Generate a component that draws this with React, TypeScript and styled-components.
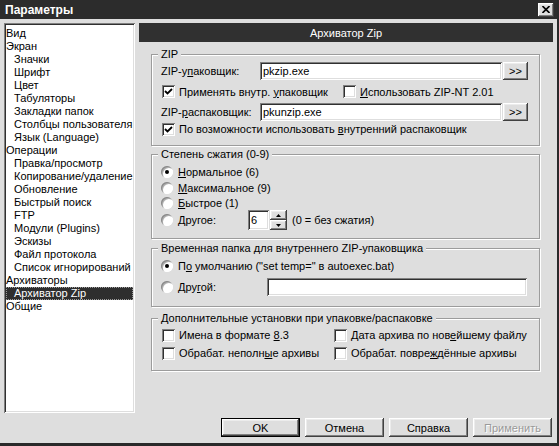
import React from 'react';
import styled, { createGlobalStyle } from 'styled-components';

const GlobalStyle = createGlobalStyle`
  html, body {
    margin: 0;
    padding: 0;
    background: #dedede;
  }
  body {
    font-family: "Liberation Sans", Arial, sans-serif;
    font-size: 11px;
    color: #000;
  }
  * {
    box-sizing: border-box;
  }
`;

const raised = `
  box-shadow: inset -1px -1px 0 #404040, inset 1px 1px 0 #ffffff,
    inset -2px -2px 0 #808080, inset 2px 2px 0 #ececec;
`;

const sunken = `
  box-shadow: inset 1px 1px 0 #808080, inset -1px -1px 0 #ffffff,
    inset 2px 2px 0 #303030, inset -2px -2px 0 #dedede;
`;

const Window = styled.div`
  width: 559px;
  height: 446px;
  background: #dedede;
  border-right: 2px solid #2a2a2a;
  border-bottom: 3px solid #2a2a2a;
  display: flex;
  flex-direction: column;
`;

const TitleBar = styled.div`
  height: 19px;
  flex: none;
  background: #2c2c2c;
  display: flex;
  align-items: center;
  justify-content: space-between;
  padding: 0 3px 0 5px;
`;

const TitleText = styled.span`
  color: #fff;
  font-weight: bold;
  font-size: 12px;
`;

const CloseButton = styled.div`
  width: 16px;
  height: 14px;
  background: #dedede;
  ${raised}
  display: flex;
  align-items: center;
  justify-content: center;
`;

const Body = styled.div`
  height: 394px;
  flex: none;
  display: flex;
  gap: 4px;
  padding: 4px 4px 0 4px;
`;

const TreeList = styled.div`
  width: 131px;
  height: 390px;
  background: #fff;
  ${sunken}
  padding: 4px 2px 2px 2px;
`;

const TreeItem = styled.div<{ $level: number; $selected?: boolean }>`
  height: 13px;
  line-height: 13px;
  white-space: nowrap;
  padding-left: ${(p) => p.$level * 8}px;
  background: ${(p) => (p.$selected ? '#2e2e2e' : 'transparent')};
  color: ${(p) => (p.$selected ? '#fff' : '#000')};
  outline: ${(p) => (p.$selected ? '1px dotted #9a9a9a' : 'none')};
  outline-offset: -1px;
`;

const Panel = styled.div`
  flex: 1;
  display: flex;
  flex-direction: column;
`;

const PanelHeader = styled.div`
  height: 19px;
  background: #303030;
  color: #fff;
  display: flex;
  align-items: center;
  justify-content: center;
`;

const Groups = styled.div`
  display: flex;
  flex-direction: column;
  padding: 0 13px 0 12px;
`;

const Group = styled.div<{ $mt: number; $pt: number; $pb: number }>`
  position: relative;
  margin-top: ${(p) => p.$mt}px;
  padding: ${(p) => p.$pt}px 8px ${(p) => p.$pb}px 9px;
  border: 1px solid #9c9c9c;
  box-shadow: inset 1px 1px 0 #fff, 1px 1px 0 #fff;
  display: flex;
  flex-direction: column;
`;

const Legend = styled.span`
  position: absolute;
  top: -7px;
  left: 6px;
  padding: 0 3px;
  line-height: 13px;
  background: #dedede;
  white-space: nowrap;
`;

const FieldRow = styled.div<{ $h: number; $mt?: number }>`
  height: ${(p) => p.$h}px;
  margin-top: ${(p) => p.$mt ?? 0}px;
  display: flex;
  align-items: center;
`;

const FieldLabel = styled.span<{ $w: number }>`
  width: ${(p) => p.$w}px;
  flex: none;
  white-space: nowrap;
`;

const TextBox = styled.div<{ $w: number; $h: number }>`
  width: ${(p) => p.$w}px;
  height: ${(p) => p.$h}px;
  flex: none;
  background: #fff;
  ${sunken}
  padding: 0 3px;
  display: flex;
  align-items: center;
`;

const BrowseButton = styled.div`
  width: 25px;
  height: 18px;
  margin-left: 1px;
  background: #dedede;
  ${raised}
  display: flex;
  align-items: center;
  justify-content: center;
  padding-bottom: 1px;
`;

const CheckItem = styled.label<{ $w?: number }>`
  width: ${(p) => (p.$w ? `${p.$w}px` : 'auto')};
  flex: none;
  display: flex;
  align-items: center;
  gap: 4px;
  white-space: nowrap;
  padding-left: 1px;
`;

const Box = styled.span`
  width: 13px;
  height: 13px;
  flex: none;
  background: #fff;
  ${sunken}
  display: flex;
  align-items: center;
  justify-content: center;
`;

const RadioDot = styled.span<{ $on?: boolean }>`
  width: 12px;
  height: 12px;
  flex: none;
  border-radius: 50%;
  background: #fff;
  box-shadow: inset 1px 1px 0 #8a8a8a, inset -1px -1px 0 #ffffff,
    inset 2px 2px 0 #b0b0b0;
  display: flex;
  align-items: center;
  justify-content: center;
  &::after {
    content: '';
    width: 4px;
    height: 4px;
    border-radius: 50%;
    background: ${(p) => (p.$on ? '#000' : 'transparent')};
  }
`;

const Option = styled.label<{ $w?: number }>`
  width: ${(p) => (p.$w ? `${p.$w}px` : 'auto')};
  flex: none;
  display: flex;
  align-items: center;
  gap: 5px;
  white-space: nowrap;
`;

const SpinInput = styled.div`
  width: 21px;
  height: 20px;
  background: #fff;
  ${sunken}
  padding-left: 3px;
  display: flex;
  align-items: center;
`;

const SpinButtons = styled.div`
  width: 17px;
  height: 20px;
  margin-left: 1px;
  display: flex;
  flex-direction: column;
`;

const SpinButton = styled.div`
  height: 10px;
  background: #dedede;
  ${raised}
  display: flex;
  align-items: center;
  justify-content: center;
`;

const Hint = styled.span`
  margin-left: 5px;
  white-space: nowrap;
`;

const Footer = styled.div`
  display: flex;
  justify-content: flex-end;
  gap: 5px;
  padding: 5px 5px 0 0;
`;

const DialogButton = styled.div<{ $default?: boolean; $disabled?: boolean }>`
  width: 79px;
  height: 19px;
  background: #dedede;
  border: ${(p) => (p.$default ? '1px solid #000' : 'none')};
  ${raised}
  display: flex;
  align-items: center;
  justify-content: center;
  color: ${(p) => (p.$disabled ? '#9a9a9a' : '#000')};
  text-shadow: ${(p) => (p.$disabled ? '1px 1px 0 #fff' : 'none')};
`;

const U = styled.span`
  text-decoration: underline;
  text-underline-offset: 1px;
`;

const Check = ({ on }: { on?: boolean }) => (
  <Box>
    {on && (
      <svg width="9" height="9" viewBox="0 0 9 9">
        <path d="M1 4 L3.5 6.5 L8 2" fill="none" stroke="#000" strokeWidth="1.8" />
      </svg>
    )}
  </Box>
);

const Arrow = ({ up }: { up?: boolean }) => (
  <svg width="5" height="3" viewBox="0 0 5 3">
    <path d={up ? 'M0 3 L2.5 0 L5 3 Z' : 'M0 0 L2.5 3 L5 0 Z'} fill="#000" />
  </svg>
);

const tree: { text: string; level: number; selected?: boolean }[] = [
  { text: 'Вид', level: 0 },
  { text: 'Экран', level: 0 },
  { text: 'Значки', level: 1 },
  { text: 'Шрифт', level: 1 },
  { text: 'Цвет', level: 1 },
  { text: 'Табуляторы', level: 1 },
  { text: 'Закладки папок', level: 1 },
  { text: 'Столбцы пользователя', level: 1 },
  { text: 'Язык (Language)', level: 1 },
  { text: 'Операции', level: 0 },
  { text: 'Правка/просмотр', level: 1 },
  { text: 'Копирование/удаление', level: 1 },
  { text: 'Обновление', level: 1 },
  { text: 'Быстрый поиск', level: 1 },
  { text: 'FTP', level: 1 },
  { text: 'Модули (Plugins)', level: 1 },
  { text: 'Эскизы', level: 1 },
  { text: 'Файл протокола', level: 1 },
  { text: 'Список игнорирований', level: 1 },
  { text: 'Архиваторы', level: 0 },
  { text: 'Архиватор Zip', level: 1, selected: true },
  { text: 'Общие', level: 0 },
];

export default function App() {
  return (
    <>
      <GlobalStyle />
      <Window>
        <TitleBar>
          <TitleText>Параметры</TitleText>
          <CloseButton>
            <svg width="8" height="7" viewBox="0 0 8 7">
              <path d="M0.5 0 L7.5 7 M7.5 0 L0.5 7" stroke="#000" strokeWidth="1.6" />
            </svg>
          </CloseButton>
        </TitleBar>

        <Body>
          <TreeList>
            {tree.map((t) => (
              <TreeItem key={t.text} $level={t.level} $selected={t.selected}>
                {t.text}
              </TreeItem>
            ))}
          </TreeList>

          <Panel>
            <PanelHeader>Архиватор Zip</PanelHeader>
            <Groups>
              <Group $mt={12} $pt={7} $pb={8}>
                <Legend>ZIP</Legend>
                <FieldRow $h={18}>
                  <FieldLabel $w={99}>
                    ZIP-у<U>п</U>аковщик:
                  </FieldLabel>
                  <TextBox $w={242} $h={18}>pkzip.exe</TextBox>
                  <BrowseButton>&gt;&gt;</BrowseButton>
                </FieldRow>
                <FieldRow $h={23}>
                  <CheckItem $w={181}>
                    <Check on />
                    <span>
                      Применять внутр. <U>у</U>паковщик
                    </span>
                  </CheckItem>
                  <CheckItem>
                    <Check />
                    <span>
                      <U>И</U>спользовать ZIP-NT 2.01
                    </span>
                  </CheckItem>
                </FieldRow>
                <FieldRow $h={18}>
                  <FieldLabel $w={99}>
                    ZIP-<U>р</U>аспаковщик:
                  </FieldLabel>
                  <TextBox $w={242} $h={18}>pkunzip.exe</TextBox>
                  <BrowseButton>&gt;&gt;</BrowseButton>
                </FieldRow>
                <FieldRow $h={16}>
                  <CheckItem>
                    <Check on />
                    <span>
                      По возможности использовать <U>в</U>нутренний распаковщик
                    </span>
                  </CheckItem>
                </FieldRow>
              </Group>

              <Group $mt={8} $pt={9} $pb={8}>
                <Legend>Степень сжатия (0-9)</Legend>
                <FieldRow $h={16}>
                  <Option>
                    <RadioDot $on />
                    <span>
                      <U>Н</U>ормальное (6)
                    </span>
                  </Option>
                </FieldRow>
                <FieldRow $h={16}>
                  <Option>
                    <RadioDot />
                    <span>
                      <U>М</U>аксимальное (9)
                    </span>
                  </Option>
                </FieldRow>
                <FieldRow $h={14}>
                  <Option>
                    <RadioDot />
                    <span>
                      <U>Б</U>ыстрое (1)
                    </span>
                  </Option>
                </FieldRow>
                <FieldRow $h={20}>
                  <Option $w={87}>
                    <RadioDot />
                    <span>
                      <U>Д</U>ругое:
                    </span>
                  </Option>
                  <SpinInput>6</SpinInput>
                  <SpinButtons>
                    <SpinButton>
                      <Arrow up />
                    </SpinButton>
                    <SpinButton>
                      <Arrow />
                    </SpinButton>
                  </SpinButtons>
                  <Hint>(0 = без сжатия)</Hint>
                </FieldRow>
              </Group>

              <Group $mt={9} $pt={9} $pb={10}>
                <Legend>Временная папка для внутреннего ZIP-упаковщика</Legend>
                <FieldRow $h={16}>
                  <Option>
                    <RadioDot $on />
                    <span>
                      П<U>о</U> умолчанию ("set temp=" в autoexec.bat)
                    </span>
                  </Option>
                </FieldRow>
                <FieldRow $h={18} $mt={4}>
                  <Option $w={106}>
                    <RadioDot />
                    <span>
                      Дру<U>г</U>ой:
                    </span>
                  </Option>
                  <TextBox $w={260} $h={18} />
                </FieldRow>
              </Group>

              <Group $mt={11} $pt={9} $pb={10}>
                <Legend>Дополнительные установки при упаковке/распаковке</Legend>
                <FieldRow $h={14}>
                  <CheckItem $w={172}>
                    <Check />
                    <span>
                      Имена в формате <U>8</U>.3
                    </span>
                  </CheckItem>
                  <CheckItem>
                    <Check />
                    <span>
                      Дата архива по нов<U>е</U>йшему файлу
                    </span>
                  </CheckItem>
                </FieldRow>
                <FieldRow $h={14} $mt={4}>
                  <CheckItem $w={172}>
                    <Check />
                    <span>
                      Обрабат. неполн<U>ы</U>е архивы
                    </span>
                  </CheckItem>
                  <CheckItem>
                    <Check />
                    <span>
                      Обрабат. повре<U>ж</U>дённые архивы
                    </span>
                  </CheckItem>
                </FieldRow>
              </Group>
            </Groups>
          </Panel>
        </Body>

        <Footer>
          <DialogButton $default>OK</DialogButton>
          <DialogButton>Отмена</DialogButton>
          <DialogButton>Справка</DialogButton>
          <DialogButton $disabled>Применить</DialogButton>
        </Footer>
      </Window>
    </>
  );
}
